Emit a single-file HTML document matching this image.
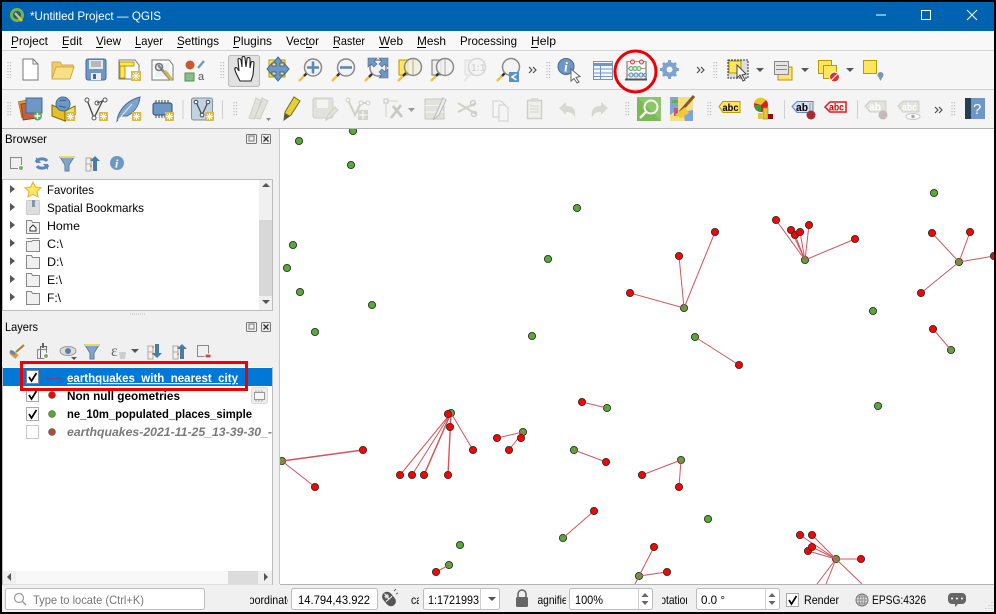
<!DOCTYPE html>
<html lang="en"><head><meta charset="utf-8"><title>QGIS</title>
<style>
html,body{margin:0;padding:0;background:#000;width:996px;height:614px;overflow:hidden}
svg{display:block}
text{font-family:"Liberation Sans",sans-serif;font-size:12px;fill:#000}
.g circle{fill:#55ab33;stroke:#2f2f2f;stroke-width:.9;r:3.6px}
.r circle{fill:#ff0000;stroke:#2f2f2f;stroke-width:.9;r:3.6px}
.l line{stroke:#d0565c;stroke-width:1}
.grip{fill:none;stroke:#bdbdbd;stroke-width:1.2;stroke-dasharray:1.2 1.8}
.y{fill:#ffe65e;stroke:#b59a00}
.b{fill:#6d97c4;stroke:#456a94}
.d{fill:#e2e2dc;stroke:#cfcfc9}
.dd{fill:none;stroke:#cfcfc9;stroke-width:2}
.lens{fill:#f2f2f2;fill-opacity:.8;stroke:#8a8a8a;stroke-width:1.5}
.hdl{stroke:#333;stroke-width:2.4}
.hdy{stroke:#f0c040;stroke-width:2.4}
.inp{fill:#fff;stroke:#bdbdbd}
.arw{fill:#555}
.chev{fill:none;stroke:#444;stroke-width:1.1}
</style></head><body>
<svg width="996" height="614" viewBox="0 0 996 614" xmlns="http://www.w3.org/2000/svg">
<rect width="996" height="614" fill="#000"/>
<rect x="2" y="2" width="992" height="610" fill="#f0f0f0"/>
<!-- title bar -->
<rect x="2" y="2" width="992" height="29" fill="#0063b1"/>
<circle cx="17" cy="15" r="5.500" fill="none" stroke="#7fb239" stroke-width="3"/>
<path d="M15 13l7 8" stroke="#f0c030" stroke-width="2.400" fill="none"/>
<text x="30" y="20" style="fill:#fff" textLength="131" lengthAdjust="spacingAndGlyphs">*Untitled Project — QGIS</text>
<path d="M876 15h10" stroke="#fff"/>
<rect x="921.500" y="10.500" width="9" height="9" fill="none" stroke="#fff"/>
<path d="M967 10l10 10M977 10l-10 10" stroke="#fff"/>
<!-- menu -->
<rect x="2" y="31" width="992" height="19" fill="#f8f8f8"/>
<path d="M2 50.500h992" stroke="#d4d4d4"/>
<text x="11" y="45" textLength="37" lengthAdjust="spacingAndGlyphs">Project</text><path d="M11 47.500h6" stroke="#000"/>
<text x="62" y="45" textLength="20" lengthAdjust="spacingAndGlyphs">Edit</text><path d="M62 47.500h6" stroke="#000"/>
<text x="96" y="45" textLength="25" lengthAdjust="spacingAndGlyphs">View</text><path d="M96 47.500h7" stroke="#000"/>
<text x="135" y="45" textLength="28" lengthAdjust="spacingAndGlyphs">Layer</text><path d="M135 47.500h6" stroke="#000"/>
<text x="177" y="45" textLength="42" lengthAdjust="spacingAndGlyphs">Settings</text><path d="M177 47.500h6" stroke="#000"/>
<text x="233" y="45" textLength="39" lengthAdjust="spacingAndGlyphs">Plugins</text><path d="M233 47.500h6" stroke="#000"/>
<text x="286" y="45" textLength="33" lengthAdjust="spacingAndGlyphs">Vector</text><path d="M306 47.500h6" stroke="#000"/>
<text x="333" y="45" textLength="32" lengthAdjust="spacingAndGlyphs">Raster</text><path d="M333 47.500h6" stroke="#000"/>
<text x="379" y="45" textLength="24" lengthAdjust="spacingAndGlyphs">Web</text><path d="M379 47.500h10" stroke="#000"/>
<text x="417" y="45" textLength="29" lengthAdjust="spacingAndGlyphs">Mesh</text><path d="M417 47.500h9" stroke="#000"/>
<text x="460" y="45" textLength="57" lengthAdjust="spacingAndGlyphs">Processing</text>
<text x="531" y="45" textLength="25" lengthAdjust="spacingAndGlyphs">Help</text><path d="M531 47.500h7" stroke="#000"/>
<!-- toolbars -->
<rect x="2" y="51" width="992" height="38" fill="#f6f6f6"/>
<rect x="2" y="90" width="992" height="38" fill="#f4f4f4"/>
<path d="M2 89.500h992" stroke="#cfcfcf"/>
<path d="M2 128.500h992" stroke="#b4b4b4"/>
<!-- grips -->
<path class="grip" d="M8 62v16M221 62v16M547 62v16M714 62v16M8 102v14M234 102v14M626 102v14M708 102v14M952 102v14"/>
<path class="grip" d="M10.500 62v16M223.500 62v16M549.500 62v16M716.500 62v16M10.500 102v14M236.500 102v14M628.500 102v14M710.500 102v14M954.500 102v14"/>
<!-- row 1 -->
<path d="M23 59h10l5 5v16H23z" fill="#fff" stroke="#777"/><path d="M33 59v5h5" fill="none" stroke="#777"/>
<path d="M52 77V62h8l2 3h11l1 2h-15z" fill="#efcb62" stroke="#d0ab44"/><path d="M52 79l4-12h18l-4 12z" fill="#f9df88" stroke="#d0ab44"/>
<rect x="86" y="59" width="20" height="21" rx="2" fill="#6d97c4" stroke="#456a94"/><rect x="89" y="60" width="14" height="9" fill="#e8e8e8"/><path d="M91 62h10M91 64h10M91 66h10" stroke="#888"/><rect x="91" y="73" width="10" height="7" fill="#eee"/><rect x="93" y="74" width="3" height="5" fill="#456a94"/>
<path d="M119 60h16l4 5v14h-20z" fill="#fff" stroke="#777"/><rect x="120" y="62" width="5" height="16" class="y"/><path d="M120 62h14v4h-14" fill="#ffe65e" stroke="#b59a00"/>
<rect x="131" y="71" width="10" height="10" fill="#e0b83e"/><path d="M136 72v8M132 76h8M133 73l6 6M139 73l-6 6" stroke="#fff"/>
<path d="M152 60h17l4 5v15h-21z" fill="#fff" stroke="#777"/><rect x="155" y="63" width="14" height="14" fill="#eef2f6"/>
<path d="M158 65l12 14" stroke="#8a8a8a" stroke-width="2.500"/><path d="M165 71l7 9" stroke="#d9b24a" stroke-width="3"/><circle cx="159" cy="67" r="3.500" fill="none" stroke="#777" stroke-width="1.600"/>
<circle cx="190" cy="65" r="4.500" fill="#c9582f"/><path d="M198 68l6-7" stroke="#6d97c4" stroke-width="2.400"/><rect x="185" y="73" width="9" height="8" fill="#8cbc8c" stroke="#5a8a5a"/><text x="198" y="80" style="font-size:11px;fill:#555">a</text>
<rect x="228.500" y="55.500" width="31" height="31" rx="2" fill="#e1e1e1" stroke="#bcbcbc"/>
<path d="M240 81l-4-8-1-3c-1-2 1-3 2-2l2 3-1-11c0-2 2-2 3 0l1 7 0-9c0-2 3-2 3 0l1 9 1-8c0-2 3-2 3 0v9l1-5c0-2 3-2 3 0l-1 12-2 6z" fill="#fff" stroke="#222" stroke-width="1.100"/>
<rect x="269" y="60" width="16" height="17" class="y"/>
<path d="M278 57l5 6h-3v3h4v-3l5 6-5 6v-3h-4v3h3l-5 6-5-6h3v-3h-4v3l-5-6 5-6v3h4v-3h-3z" fill="#6d97c4" stroke="#456a94"/>
<g><path class="hdy" d="M299 81l5-5"/><path class="hdl" d="M304 76l3-3"/><circle class="lens" cx="313" cy="67.500" r="8.500"/><path d="M313 61.500v12M307 67.500h12" stroke="#5b88b8" stroke-width="2.600"/></g>
<g><path class="hdy" d="M332 81l5-5"/><path class="hdl" d="M337 76l3-3"/><circle class="lens" cx="346" cy="67.500" r="8.500"/><path d="M340 67.500h12" stroke="#5b88b8" stroke-width="2.600"/></g>
<g><circle class="lens" cx="378" cy="68" r="8" style="fill:#f0f0f0;fill-opacity:1"/><path d="M368 58h9l-3 3 3 3-3 3-3-3-3 3zM388 58h-9l3 3-3 3 3 3 3-3 3 3zM388 78h-9l3-3-3-3 3-3 3 3 3-3z" fill="#6d97c4" stroke="#456a94" stroke-width=".6"/><path class="hdy" d="M365 81l4-4"/><path class="hdl" d="M369 77l3-3"/></g>
<g><rect x="399" y="60" width="9" height="15" class="y"/><path class="hdy" d="M398 81l5-5"/><path class="hdl" d="M403 76l3-3"/><circle class="lens" cx="413" cy="67" r="8.500" style="fill:#f3efd8"/><path d="M413 59v16" stroke="#aaa"/></g>
<g><rect x="432" y="60" width="9" height="15" fill="#eee" stroke="#777"/><path class="hdy" d="M431 81l5-5"/><path class="hdl" d="M436 76l3-3"/><circle class="lens" cx="445" cy="67" r="8.500"/><path d="M445 59v16" stroke="#aaa"/></g>
<g opacity=".55"><rect x="465" y="60" width="10" height="15" fill="#eee" stroke="#ccc"/><path d="M464 81l8-8" stroke="#ddd" stroke-width="2.400"/><circle cx="477" cy="67" r="8.500" fill="#f4f4f4" stroke="#bbb" stroke-width="1.500"/><text x="471" y="71" style="font-size:10px;font-weight:bold;fill:#bbb">1:1</text></g>
<g><path class="hdy" d="M497 81l5-5"/><path class="hdl" d="M502 76l3-3"/><circle class="lens" cx="511" cy="67" r="8.500"/><rect x="509" y="72" width="10" height="10" fill="#5b8fc8"/><path d="M516.500 74l-4.500 3 4.500 3" fill="none" stroke="#fff" stroke-width="1.600"/></g>
<path class="chev" d="M529 67l3 3-3 3M533 67l3 3-3 3"/>
<circle cx="566" cy="66.500" r="8" fill="#6d97c4" stroke="#456a94"/><text x="564" y="71.500" style="font-family:'Liberation Serif',serif;font-style:italic;font-weight:bold;font-size:14px;fill:#fff">i</text>
<path d="M571 69l0 12 3-2.500 3 4.500 2-1-3-4.500 4-1z" fill="#fff" stroke="#666"/>
<rect x="593.500" y="61.500" width="19" height="18" fill="#f4f8fc" stroke="#6d97c4"/><path d="M593 64.500h19" stroke="#6d97c4" stroke-width="3"/><path d="M594 69h18M594 73h18M594 76.500h18M600.500 66v13" stroke="#6d97c4"/>
<!-- abacus -->
<path d="M627 61v19M646 61v19" stroke="#666"/><path d="M625 79.500h22" stroke="#555" stroke-width="2"/><path d="M627 61.500h19M627 68.500h19M627 75h19" stroke="#999"/>
<g fill="#f4d4d4" stroke="#d54040"><circle cx="632.500" cy="62" r="2"/><circle cx="641.500" cy="62" r="2"/></g>
<g fill="#d8ecd8" stroke="#63a863"><circle cx="631" cy="68.500" r="2"/><circle cx="635" cy="68.500" r="2"/><circle cx="639" cy="68.500" r="2"/></g>
<g fill="#d8e4f0" stroke="#5b88b8"><circle cx="631" cy="75" r="2"/><circle cx="636" cy="75" r="2"/><circle cx="641" cy="75" r="2"/><circle cx="645" cy="75" r="1.500"/></g>
<circle cx="635.500" cy="71.500" r="20.500" fill="none" stroke="#ee0000" stroke-width="3"/>
<!-- gear -->
<circle cx="669.500" cy="69.500" r="5.500" fill="none" stroke="#7ea3cc" stroke-width="4"/>
<path d="M669.500 60v19M660 69.500h19M663 63l13 13M676 63l-13 13" stroke="#7ea3cc" stroke-width="3"/><circle cx="669.500" cy="69.500" r="3" fill="#f6f6f6"/>
<path class="chev" d="M697 67l3 3-3 3M701 67l3 3-3 3"/>
<rect x="728" y="60" width="20" height="18" fill="#dedede"/><rect x="729" y="61" width="12" height="12" class="y"/><rect x="728" y="60" width="20" height="18" fill="none" stroke="#333" stroke-dasharray="2 1"/>
<path d="M737 65v13l3-3 3 6 2-1-3-5 4-1z" fill="#fff" stroke="#444"/>
<path class="arw" d="M756 68h8l-4 4z"/>
<rect x="778" y="67" width="14" height="13" class="y"/><rect x="774.500" y="61.500" width="14" height="13" fill="#e4e4e4" stroke="#888"/><path d="M776 65.500h11M776 69.500h11" stroke="#888"/>
<path class="arw" d="M801 68h8l-4 4z"/>
<rect x="818.500" y="60.500" width="13" height="13" class="y"/><rect x="823.500" y="65.500" width="13" height="13" class="y"/><circle cx="834.500" cy="77" r="5" fill="#d33" stroke="#fff"/><path d="M831.500 80l6-6" stroke="#fff"/>
<path class="arw" d="M846 68h8l-4 4z"/>
<rect x="863.500" y="60.500" width="13" height="13" class="y"/><circle cx="880.500" cy="75" r="3" fill="#7c97b2"/><path d="M878 76l2.500 5 2.500-5" fill="#7c97b2"/>
<!-- row 2 -->
<rect x="20" y="100" width="17" height="16" fill="#e9a13e" stroke="#b5741c" transform="rotate(-12 28 108)"/><rect x="22" y="103" width="15" height="16" fill="#c65f3b" stroke="#8f3f24" transform="rotate(-8 29 111)"/><rect x="26" y="98" width="16" height="15" fill="#6d97c4" stroke="#456a94"/>
<circle cx="37.500" cy="116" r="4.500" fill="#5fa45f"/><path d="M37.500 113v6M34.500 116h6" stroke="#fff" stroke-width="1.500"/>
<path d="M52 105l13 6v10l-13-5z" fill="#e6c220" stroke="#7a6a10"/><path d="M65 111l10-5v9l-10 6z" fill="#f4e05c" stroke="#7a6a10"/><circle cx="63" cy="104" r="7" fill="#6d97c4" stroke="#456a94"/>
<path d="M60 101c2-2 4 0 6-1M59 106c3 0 4 2 7 1" stroke="#2c5a8c" fill="none"/>
<rect x="66" y="112" width="9" height="9" fill="#e0b83e"/><path d="M70.500 113v7M67 116.500h7M68 114l5 5M73 114l-5 5" stroke="#fff"/>
<path d="M87 100l7 18 9-18" fill="none" stroke="#444" stroke-width="1.300"/><circle cx="87" cy="100" r="2" fill="#fff" stroke="#555"/><circle cx="94" cy="118" r="2" fill="#fff" stroke="#555"/><circle cx="97" cy="103" r="2" fill="#fff" stroke="#555"/><path d="M97 103l8-3" stroke="#444"/><circle cx="105" cy="100" r="2" fill="#fff" stroke="#555"/>
<rect x="99" y="112" width="9" height="9" fill="#e0b83e"/><path d="M103.500 113v7M100 116.500h7M101 114l5 5M106 114l-5 5" stroke="#fff"/>
<path d="M117 121c1-9 8-20 23-24-1 10-7 16-13 19l-6 0z" fill="#7fa5cf" stroke="#456a94"/><path d="M118 120l14-16" stroke="#dfe9f3"/>
<rect x="132" y="112" width="9" height="9" fill="#e0b83e"/><path d="M136.500 113v7M133 116.500h7M134 114l5 5M139 114l-5 5" stroke="#fff"/>
<rect x="153" y="103" width="19" height="12" rx="2" fill="#6d97c4" stroke="#2e4e72"/><path d="M156 100v3M159 100v3M162 100v3M165 100v3M168 100v3M156 115v3M159 115v3M162 115v3M165 115v3" stroke="#444"/>
<rect x="165" y="112" width="9" height="9" fill="#e0b83e"/><path d="M169.500 113v7M166 116.500h7M167 114l5 5M172 114l-5 5" stroke="#fff"/>
<path d="M183 100v19M222.500 100v19M784.500 100v19M857.500 100v19" stroke="#cfcfcf"/>
<rect x="191.500" y="98" width="21" height="22" rx="2" fill="#c2d2e4" stroke="#7f8fa3"/><path d="M196 102l6 13 6-13" fill="none" stroke="#444" stroke-width="1.200"/><circle cx="196" cy="102" r="1.800" fill="#fff" stroke="#444"/><circle cx="202" cy="115" r="1.800" fill="#fff" stroke="#444"/><circle cx="208" cy="102" r="1.800" fill="#fff" stroke="#444"/>
<rect x="205" y="112" width="9" height="9" fill="#e0b83e"/><path d="M209.500 113v7M206 116.500h7M207 114l5 5M212 114l-5 5" stroke="#fff"/>
<!-- disabled -->
<path d="M249 118l7-20 6 3-8 18zM255 118l7-20 6 3-8 18z" class="d"/><path d="M266 118h5l-2.500 3z" fill="#888"/>
<path d="M284 120l1-8 9-15 6 4-9 14z" fill="#e6cf3a" stroke="#7c6a10"/><path d="M284 120l1-7 5 3z" fill="#555"/>
<rect x="313" y="98" width="20" height="20" rx="2" class="d"/><rect x="317" y="100" width="11" height="8" fill="#f4f4f4"/><path d="M326 120l2-5 7-8 3 3-8 8z" class="d"/>
<path class="dd" d="M348 100l7 15 6-12M361 103h7"/><circle cx="348" cy="100" r="2" fill="#f4f4f4" stroke="#cfcfc9"/><circle cx="361" cy="103" r="2" fill="#f4f4f4" stroke="#cfcfc9"/><circle cx="368" cy="103" r="2" fill="#f4f4f4" stroke="#cfcfc9"/><rect x="358" y="110" width="10" height="10" fill="#d4d4ce"/><path d="M363 111v8M359 115h8" stroke="#fff"/>
<path d="M386 101v16M386 101h12" fill="none" stroke="#cfcfc9"/><rect x="384" y="99" width="4" height="4" fill="#f4f4f4" stroke="#c4c4c0"/><path d="M391 118l10-13M393 106l9 11" stroke="#c8c8c2" stroke-width="2.600"/><path class="arw" d="M408 108h7l-3.500 4z" style="fill:#999"/>
<rect x="425" y="99" width="19" height="20" fill="#e2e2da" stroke="#c9c9c0"/><path d="M425 105.500h19M425 112h19" stroke="#f4f4f4"/><path d="M433 120l3-6 7-16 3 2-7 15z" fill="#eee" stroke="#bbb"/>
<path d="M458 103l18 11M458 112l18-9" stroke="#d0d0ca" stroke-width="2"/><circle cx="473" cy="103" r="2.500" fill="none" stroke="#ccc" stroke-width="1.400"/><circle cx="474" cy="114" r="2.500" fill="none" stroke="#ccc" stroke-width="1.400"/>
<path d="M493 101h8l4 4v12h-12z" fill="#f5f5f5" stroke="#d0d0d0"/><path d="M499 105h6l3 3v13h-9z" fill="#f5f5f5" stroke="#d0d0d0"/>
<rect x="527.500" y="100.500" width="14" height="18" fill="#f0f0ea" stroke="#cfcfc9" stroke-width="1.500"/><rect x="531" y="98" width="7" height="4" fill="#dcdcd6"/><path d="M530 106h9M530 109h9M530 112h9" stroke="#d4d4ce"/>
<path d="M559 108l7-6v4c8 0 10 4 9 12-2-5-4-6-9-6v3z" fill="#d8d8d2"/><path d="M608 108l-7-6v4c-8 0-10 4-9 12 2-5 4-6 9-6v3z" fill="#d8d8d2"/>
<!-- search / map -->
<rect x="637" y="97" width="24" height="24" fill="#7db75a"/><path d="M637 97h24v24z" fill="#8dc46c"/><circle cx="651" cy="107" r="6.500" fill="none" stroke="#f2f6ee" stroke-width="2"/><path d="M646 112l-6 6" stroke="#f2f6ee" stroke-width="2.400"/>
<rect x="670" y="97" width="23" height="24" fill="#f2df88"/><path d="M670 97h8v12l-8 6zM683 112l10-2v11h-8z" fill="#7fa5dc"/><path d="M672 100h6v3h-6z" fill="#6ab04a"/><path d="M674 108h4v8h-4z" fill="#c45a6a"/><path d="M680 112l14-16" stroke="#8a5a24" stroke-width="3"/><path d="M675 115l10-8 4 6-8 5z" fill="#f0c838"/>
<!-- labels -->
<path d="M719 106.500l4-5h17v11h-17z" class="y"/><text x="722.500" y="111" style="font-size:10px;font-weight:bold" textLength="16" lengthAdjust="spacingAndGlyphs">abc</text>
<circle cx="761" cy="105" r="7" fill="#d92020"/><path d="M761 105l-7-2a7 7 0 0 1 12-3z" fill="#e6c820"/><path d="M761 105v7a7 7 0 0 1-7-7z" fill="#3a9a3a"/>
<rect x="763" y="108" width="5" height="11" fill="#e6c820" stroke="#8a7a10" stroke-width=".6"/><rect x="768" y="114" width="5" height="5" fill="#8a1010"/><rect x="758" y="113" width="4" height="6" fill="#e6c820"/>
<path d="M792 106.500l5-5h16v11h-16z" fill="#cfe0f4" stroke="#5b88b8"/><text x="796" y="111" style="font-size:11px;font-weight:bold" textLength="12" lengthAdjust="spacingAndGlyphs">ab</text><path d="M810 103v8" stroke="#bbb" stroke-width="2"/><circle cx="811" cy="115" r="4.500" fill="#a82a36"/>
<path d="M825 107l5-5h16v10h-16z" fill="#fff" stroke="#e8101c" stroke-width="1.500"/><text x="829" y="110.500" style="font-size:10px;font-weight:bold;fill:#d00" textLength="15" lengthAdjust="spacingAndGlyphs">abc</text>
<path d="M865 106l5-5h16v11h-16z" class="d"/><text x="869" y="110.500" style="font-size:11px;font-weight:bold;fill:#fff" textLength="12" lengthAdjust="spacingAndGlyphs">ab</text><circle cx="883" cy="115" r="4.500" fill="#c8b8bc"/>
<path d="M898 106l5-5h16v11h-16z" class="d"/><text x="902" y="110.500" style="font-size:10px;font-weight:bold;fill:#fff" textLength="15" lengthAdjust="spacingAndGlyphs">abc</text>
<ellipse cx="913" cy="116.500" rx="7" ry="3" fill="#fff" stroke="#c8c8c8"/><circle cx="913" cy="116.500" r="1.800" fill="#aaa"/>
<path class="chev" d="M935 107l3 3-3 3M939 107l3 3-3 3"/>
<rect x="965" y="98" width="20" height="21" fill="#6d97c4"/><rect x="965" y="98" width="6" height="21" fill="#243c54"/><text x="973" y="114" style="font-size:15px;fill:#fff">?</text>
<!-- Browser panel -->
<rect x="2" y="129" width="277" height="456" fill="#f0f0f0"/>
<text x="5" y="143" textLength="42" lengthAdjust="spacingAndGlyphs">Browser</text>
<g fill="none" stroke="#777"><rect x="246.500" y="134.500" width="10" height="9" rx="1"/><rect x="249" y="136" width="5" height="5"/><rect x="261.500" y="134.500" width="9" height="9" rx="1"/><path d="M263.500 136.500l5 5M268.500 136.500l-5 5" stroke="#333" stroke-width="1.300"/></g>
<rect x="10.500" y="157.500" width="11" height="11" fill="none" stroke="#888"/><circle cx="21" cy="168" r="2.600" fill="#7db06a" stroke="#fff"/>
<path d="M36 162c2-4 9-4 11-1M48 165c-2 4-9 4-11 1" fill="none" stroke="#5b88b8" stroke-width="3"/><path d="M36 157v6h5zM48 170v-6h-5z" fill="#5b88b8"/>
<path d="M60 157h14l-5 8v6h-4v-6z" fill="#7fa5cf" stroke="#5b7f9f"/><path d="M60 157h14" stroke="#ecd957" stroke-width="2"/>
<path d="M86 158h5v13h-5zM86 164h5" fill="none" stroke="#aaa"/><rect x="90" y="158" width="2" height="2" fill="#f29a2e"/><rect x="90" y="165" width="2" height="2" fill="#f29a2e"/><path d="M95 156l5 5h-3v10h-4v-10h-3z" fill="#4a7aa8"/>
<circle cx="117" cy="163" r="7" fill="#6d97c4"/><text x="115" y="167.500" style="font-family:'Liberation Serif',serif;font-style:italic;font-weight:bold;font-size:12px;fill:#fff">i</text>
<!-- tree -->
<rect x="2.500" y="179.500" width="270" height="131" fill="#fff" stroke="#bdbdbd"/>
<rect x="259" y="180" width="13" height="130" fill="#f0f0f0"/><rect x="259" y="220" width="13" height="76" fill="#cdcdcd" opacity=".7"/>
<path class="arw" d="M262 187h8l-4-4zM262 300h8l-4 4z"/>
<g class="arw"><path d="M10 185l5 4-5 4zM10 203l5 4-5 4zM10 221l5 4-5 4zM10 239l5 4-5 4zM10 257l5 4-5 4zM10 275l5 4-5 4zM10 293l5 4-5 4z"/></g>
<path d="M33 182l2.400 5 5.600.7-4 3.800 1 5.500-5-2.700-5 2.700 1-5.500-4-3.800 5.600-.7z" fill="#ffe65e" stroke="#d8b830"/>
<rect x="26.500" y="200.500" width="13" height="14" rx="1" fill="#ddd" stroke="#ccc"/><rect x="32" y="200" width="3" height="7" fill="#7c97b2"/>
<g fill="#f0f0f0" stroke="#888"><path d="M26.500 220.500h5l1 2h7v11h-13z"/><path d="M26.500 238.500h13M26.500 241.500h5l1-1h7v11h-13z"/><path d="M26.500 255.500h5l1 2h7v11h-13z"/><path d="M26.500 273.500h5l1 2h7v11h-13z"/><path d="M26.500 291.500h5l1 2h7v11h-13z"/></g>
<path d="M30 228l3-3 3 3v3h-6z" fill="#fff" stroke="#333"/>
<text x="47" y="194" textLength="47" lengthAdjust="spacingAndGlyphs">Favorites</text>
<text x="47" y="212" textLength="97" lengthAdjust="spacingAndGlyphs">Spatial Bookmarks</text>
<text x="47" y="230" textLength="33" lengthAdjust="spacingAndGlyphs">Home</text>
<text x="47" y="248" textLength="16" lengthAdjust="spacingAndGlyphs">C:\</text>
<text x="47" y="266" textLength="16" lengthAdjust="spacingAndGlyphs">D:\</text>
<text x="47" y="284" textLength="15" lengthAdjust="spacingAndGlyphs">E:\</text>
<text x="47" y="302" textLength="14" lengthAdjust="spacingAndGlyphs">F:\</text>
<path d="M130 314h16" stroke="#bbb" stroke-dasharray="1 1"/>
<!-- Layers -->
<text x="5" y="331" textLength="33" lengthAdjust="spacingAndGlyphs">Layers</text>
<g fill="none" stroke="#777"><rect x="246.500" y="322.500" width="10" height="9" rx="1"/><rect x="249" y="324" width="5" height="5"/><rect x="261.500" y="322.500" width="9" height="9" rx="1"/><path d="M263.500 324.500l5 5M268.500 324.500l-5 5" stroke="#333" stroke-width="1.300"/></g>
<path d="M11 352l6 5" stroke="#e09830" stroke-width="5"/><path d="M10 351l5 3" stroke="#5b88b8" stroke-width="3"/><path d="M16 352l8-7" stroke="#a88030" stroke-width="2"/>
<rect x="40.500" y="346.500" width="6" height="12" fill="none" stroke="#666"/><rect x="37.500" y="349.500" width="9" height="9" fill="none" stroke="#888"/><path d="M43 343v5" stroke="#666" stroke-width="2"/><circle cx="46" cy="356" r="2.600" fill="#7db06a" stroke="#fff"/>
<ellipse cx="68" cy="351" rx="8" ry="4.500" fill="#dedede" stroke="#999"/><circle cx="68" cy="351" r="3" fill="#5b7fa3"/><path class="arw" d="M71 357h6l-3 3z"/>
<path d="M85 345h14l-5 8v6h-4v-6z" fill="#7fa5cf" stroke="#5b7f9f"/><path d="M85 345h14" stroke="#ecd957" stroke-width="2"/>
<text x="111" y="356" style="font-size:16px;fill:#666;font-family:'Liberation Serif',serif">ε</text><path d="M119 352h7l-1 7h-5z" fill="#ccc"/>
<path class="arw" d="M131 349h8l-4 4z"/>
<path d="M148 346h5v13h-5zM148 352h5" fill="none" stroke="#aaa"/><rect x="152" y="346" width="2" height="2" fill="#f29a2e"/><rect x="152" y="353" width="2" height="2" fill="#f29a2e"/><path d="M157 358l5-5h-3v-9h-4v9h-3z" fill="#4a7aa8"/>
<path d="M173 346h5v13h-5zM173 352h5" fill="none" stroke="#aaa"/><rect x="177" y="346" width="2" height="2" fill="#f29a2e"/><rect x="177" y="353" width="2" height="2" fill="#f29a2e"/><path d="M182 344l5 5h-3v10h-4v-10h-3z" fill="#4a7aa8"/>
<rect x="197.500" y="345.500" width="11" height="11" fill="none" stroke="#888"/><rect x="205" y="354" width="6" height="4" fill="#e04040" stroke="#fff"/>
<rect x="2" y="367" width="271" height="218" fill="#fff"/>
<path d="M2.500 367v218h270V367" fill="none" stroke="#bdbdbd"/>
<rect x="3" y="368" width="269" height="18" fill="#0078d7"/>
<rect x="26.500" y="370.500" width="12" height="13" fill="#fff" stroke="#888"/>
<rect x="26.500" y="388.500" width="12" height="13" fill="#fff" stroke="#aaa"/>
<rect x="26.500" y="407.500" width="12" height="13" fill="#fff" stroke="#aaa"/>
<rect x="26.500" y="425.500" width="12" height="13" fill="#fff" stroke="#c8c8c8"/>
<path d="M29 377l2.500 4 5-8M29 395l2.500 4 5-8M29 414l2.500 4 5-8" fill="none" stroke="#000" stroke-width="1.700"/>
<path d="M45 378.500h16" stroke="#6a4a7a"/>
<circle cx="52" cy="395" r="3.500" fill="#e01010" stroke="#444" stroke-width=".5"/>
<circle cx="52" cy="414" r="3.500" fill="#54a832" stroke="#444" stroke-width=".5"/>
<circle cx="52" cy="432" r="3.500" fill="#a8503a" stroke="#444" stroke-width=".5"/>
<text x="67" y="382" style="font-weight:bold;fill:#fff" textLength="171" lengthAdjust="spacingAndGlyphs" text-decoration="underline">earthquakes_with_nearest_city</text>
<text x="67" y="400" style="font-weight:bold" textLength="113" lengthAdjust="spacingAndGlyphs">Non null geometries</text>
<text x="67" y="418" style="font-weight:bold" textLength="185" lengthAdjust="spacingAndGlyphs">ne_10m_populated_places_simple</text>
<svg x="67" y="424" width="205" height="16"><text x="0" y="12" style="font-weight:bold;font-style:italic;fill:#7a7a7a" textLength="205" lengthAdjust="spacingAndGlyphs">earthquakes-2021-11-25_13-39-30_-</text></svg>
<rect x="251.500" y="387.500" width="16" height="16" rx="2" fill="#ececec" stroke="#dcdcdc"/><rect x="254.500" y="392.500" width="10" height="7" fill="#f6f6f6" stroke="#999"/><path d="M256 390.500v2M259 390.500v2M262 390.500v2M256 399.500v2M259 399.500v2M262 399.500v2" stroke="#999"/>
<rect x="21.500" y="362.500" width="225" height="27" fill="none" stroke="#ee0000" stroke-width="3"/>
<!-- hscroll -->
<rect x="3" y="571" width="269" height="13" fill="#f0f0f0"/><rect x="16" y="571" width="212" height="13" fill="#f8f8f8"/><rect x="228" y="571" width="30" height="13" fill="#dcdcdc"/>
<path class="arw" d="M11 573v8l-4-4zM264 573v8l4-4z"/>
<!-- map -->
<rect x="280" y="129" width="714" height="455" fill="#fff"/>
<path d="M279.500 129v455" stroke="#c8c8c8"/>
<svg x="280" y="129" width="714" height="455" viewBox="280 129 714 455">
<g class="g">
<circle cx="299" cy="141" r="4"/><circle cx="353" cy="131" r="4"/><circle cx="351" cy="165" r="4"/><circle cx="577" cy="208" r="4"/><circle cx="293" cy="245" r="4"/><circle cx="287" cy="268" r="4"/><circle cx="300" cy="292" r="4"/><circle cx="372" cy="305" r="4"/><circle cx="315" cy="332" r="4"/><circle cx="548" cy="259" r="4"/><circle cx="532" cy="336" r="4"/>
<circle cx="684" cy="308" r="4"/><circle cx="695" cy="337" r="4"/><circle cx="805" cy="260" r="4"/><circle cx="934" cy="193" r="4"/><circle cx="959" cy="262" r="4"/><circle cx="873" cy="311" r="4"/><circle cx="951" cy="350" r="4"/>
<circle cx="282" cy="461" r="4"/><circle cx="451" cy="413" r="4"/><circle cx="523" cy="432" r="4"/><circle cx="607" cy="408" r="4"/><circle cx="574" cy="450" r="4"/><circle cx="563" cy="538" r="4"/><circle cx="460" cy="545" r="4"/><circle cx="449" cy="565" r="4"/><circle cx="639" cy="576" r="4"/><circle cx="681" cy="460" r="4"/><circle cx="708" cy="519" r="4"/><circle cx="836" cy="559" r="4"/><circle cx="878" cy="406" r="4"/>
</g>
<g class="l">
<line x1="684" y1="308" x2="630" y2="293"/><line x1="684" y1="308" x2="679" y2="256"/><line x1="684" y1="308" x2="715" y2="232"/>
<line x1="695" y1="337" x2="739" y2="365"/>
<line x1="805" y1="260" x2="776" y2="220"/><line x1="805" y1="260" x2="791" y2="230"/><line x1="805" y1="260" x2="795" y2="235"/><line x1="805" y1="260" x2="800" y2="232"/><line x1="805" y1="260" x2="809" y2="225"/><line x1="805" y1="260" x2="855" y2="239"/>
<line x1="959" y1="262" x2="932" y2="233"/><line x1="959" y1="262" x2="970" y2="232"/><line x1="959" y1="262" x2="994" y2="256"/><line x1="959" y1="262" x2="921" y2="293"/>
<line x1="951" y1="350" x2="933" y2="329"/>
<line x1="282" y1="461" x2="363" y2="450" style="stroke-width:1.500"/><line x1="282" y1="461" x2="315" y2="487"/>
<line x1="451" y1="413" x2="448" y2="414"/><line x1="451" y1="413" x2="450" y2="427"/><line x1="451" y1="413" x2="473" y2="450"/><line x1="451" y1="413" x2="400" y2="475"/><line x1="451" y1="413" x2="412" y2="475"/><line x1="451" y1="413" x2="424" y2="475" style="stroke-width:1.500"/><line x1="451" y1="413" x2="448" y2="475" style="stroke-width:1.400"/>
<line x1="523" y1="432" x2="497" y2="438"/><line x1="523" y1="432" x2="521" y2="438"/><line x1="523" y1="432" x2="509" y2="450"/>
<line x1="607" y1="408" x2="582" y2="402"/><line x1="574" y1="450" x2="606" y2="462"/><line x1="563" y1="538" x2="594" y2="511"/><line x1="449" y1="565" x2="436" y2="572"/>
<line x1="681" y1="460" x2="642" y2="475"/><line x1="681" y1="460" x2="679" y2="487"/>
<line x1="639" y1="576" x2="654" y2="547"/><line x1="639" y1="576" x2="667" y2="572"/>
<line x1="639" y1="576" x2="632" y2="590"/>
<line x1="836" y1="559" x2="800" y2="535"/><line x1="836" y1="559" x2="812" y2="535"/><line x1="836" y1="559" x2="812" y2="547"/><line x1="836" y1="559" x2="808" y2="551"/><line x1="836" y1="559" x2="861" y2="559"/><line x1="836" y1="559" x2="817" y2="584"/><line x1="836" y1="559" x2="826" y2="584"/><line x1="836" y1="559" x2="862" y2="584"/>
</g>
<g class="r">
<circle cx="630" cy="293" r="4"/><circle cx="679" cy="256" r="4"/><circle cx="715" cy="232" r="4"/><circle cx="739" cy="365" r="4"/>
<circle cx="776" cy="220" r="4"/><circle cx="791" cy="230" r="4"/><circle cx="795" cy="235" r="4"/><circle cx="800" cy="232" r="4"/><circle cx="809" cy="225" r="4"/><circle cx="855" cy="239" r="4"/>
<circle cx="932" cy="233" r="4"/><circle cx="970" cy="232" r="4"/><circle cx="994" cy="256" r="4"/><circle cx="921" cy="293" r="4"/><circle cx="933" cy="329" r="4"/>
<circle cx="363" cy="450" r="4"/><circle cx="315" cy="487" r="4"/><circle cx="448" cy="414" r="4"/><circle cx="450" cy="427" r="4"/><circle cx="473" cy="450" r="4"/><circle cx="400" cy="475" r="4"/><circle cx="412" cy="475" r="4"/><circle cx="424" cy="475" r="4"/><circle cx="448" cy="475" r="4"/>
<circle cx="497" cy="438" r="4"/><circle cx="521" cy="438" r="4"/><circle cx="509" cy="450" r="4"/><circle cx="582" cy="402" r="4"/><circle cx="606" cy="462" r="4"/><circle cx="642" cy="475" r="4"/><circle cx="594" cy="511" r="4"/><circle cx="436" cy="572" r="4"/><circle cx="679" cy="487" r="4"/><circle cx="654" cy="547" r="4"/><circle cx="667" cy="572" r="4"/>
<circle cx="800" cy="535" r="4"/><circle cx="812" cy="535" r="4"/><circle cx="808" cy="551" r="4"/><circle cx="812" cy="547" r="4"/><circle cx="861" cy="559" r="4"/>
</g>
</svg>
<path d="M280 584.500h714" stroke="#b4b4b4"/>
<!-- status bar -->
<rect x="2" y="585" width="992" height="27" fill="#f0f0f0"/>
<rect x="5.500" y="588.500" width="199" height="21" rx="2" class="inp"/>
<circle cx="19" cy="598" r="4.500" fill="none" stroke="#999" stroke-width="1.200"/><path d="M22 601l4 4" stroke="#999" stroke-width="1.300"/>
<text x="33" y="604" style="fill:#777" textLength="111" lengthAdjust="spacingAndGlyphs">Type to locate (Ctrl+K)</text>
<svg x="250" y="590" width="38" height="18"><text x="-9" y="14" textLength="52" lengthAdjust="spacingAndGlyphs">Coordinate</text></svg>
<rect x="291.500" y="588.500" width="86" height="21" rx="2" class="inp"/>
<text x="298" y="604" textLength="72" lengthAdjust="spacingAndGlyphs">14.794,43.922</text>
<g transform="rotate(-40 389 599)"><rect x="384" y="591" width="10" height="16" rx="5" fill="#555"/><path d="M389 592v7M385 599h8" stroke="#fff"/><rect x="387" y="594" width="4" height="3" fill="#ddd"/></g><path d="M394 591l2-2M396 594l2-1" stroke="#666"/>
<svg x="411" y="590" width="8" height="18"><text x="-7" y="14" textLength="18" lengthAdjust="spacingAndGlyphs">Sca</text></svg>
<rect x="423.500" y="588.500" width="76" height="21" rx="2" class="inp"/><path d="M480.500 589v20" stroke="#d0d0d0"/>
<text x="428" y="604" textLength="51" lengthAdjust="spacingAndGlyphs">1:1721993</text>
<path class="arw" d="M488 597h8l-4 4z"/>
<path d="M518 597v-3a4 4 0 0 1 8 0v3" fill="none" stroke="#666" stroke-width="1.600"/><rect x="516" y="597" width="12" height="10" rx="1.500" fill="#666"/>
<svg x="537" y="590" width="29" height="18"><text x="-8" y="14" textLength="42" lengthAdjust="spacingAndGlyphs">Magnifier</text></svg>
<rect x="569.500" y="588.500" width="83" height="21" rx="2" class="inp"/><path d="M638.500 589v20" stroke="#d0d0d0"/>
<text x="575" y="604" textLength="28" lengthAdjust="spacingAndGlyphs">100%</text>
<path d="M645 593l-3.500 4h7zM645 605l-3.500-4h7z" fill="#666"/>
<svg x="662" y="590" width="25" height="18"><text x="-9" y="14" textLength="38" lengthAdjust="spacingAndGlyphs">Rotation</text></svg>
<rect x="696.500" y="588.500" width="83" height="21" rx="2" class="inp"/><path d="M765.500 589v20" stroke="#d0d0d0"/>
<text x="701" y="604" textLength="24" lengthAdjust="spacingAndGlyphs">0.0 °</text>
<path d="M772 593l-3.500 4h7zM772 605l-3.500-4h7z" fill="#666"/>
<rect x="786.500" y="593.500" width="12" height="13" fill="#fff" stroke="#aaa"/><path d="M789 600l2.500 4 5-8" fill="none" stroke="#000" stroke-width="1.700"/>
<text x="804" y="604" textLength="35" lengthAdjust="spacingAndGlyphs">Render</text>
<circle cx="862" cy="600" r="6" fill="#ddd" stroke="#777"/><path d="M856 600h12M862 594v12M857 597h10M857 603h10" stroke="#777" stroke-width=".7"/><ellipse cx="862" cy="600" rx="3" ry="6" fill="none" stroke="#777" stroke-width=".7"/>
<text x="872" y="604" textLength="54" lengthAdjust="spacingAndGlyphs">EPSG:4326</text>
<path d="M952 593h10a4 4 0 0 1 4 4v3a4 4 0 0 1-4 4h-4l-3 3v-3h-3a4 4 0 0 1-4-4v-3a4 4 0 0 1 4-4z" fill="#666"/><circle cx="952" cy="598.500" r="1" fill="#fff"/><circle cx="957" cy="598.500" r="1" fill="#fff"/><circle cx="962" cy="598.500" r="1" fill="#fff"/>
<path d="M992 602v1M989 605v1M992 605v1M986 608v1M989 608v1M992 608v1" stroke="#bbb"/>
</svg>
</body></html>
